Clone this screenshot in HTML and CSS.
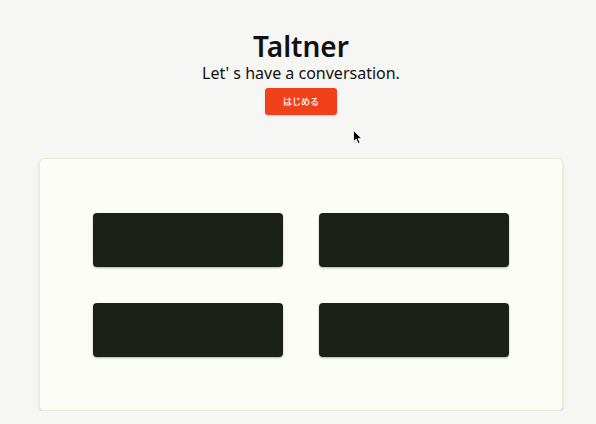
FILE: index.html
```html
<!DOCTYPE html>
<html lang="ja">
<head>
<meta charset="utf-8">
<title>Taltner</title>
<link rel="stylesheet" href="styles.css">
</head>
<body>
<div class="page">
  <header class="hero">
    <h1 class="title">Taltner</h1>
    <p class="subtitle">Let' s have a conversation.</p>
    <button class="start">はじめる</button>
  </header>
  <section class="card">
    <div class="block"></div>
    <div class="block"></div>
    <div class="block"></div>
    <div class="block"></div>
  </section>
</div>
<svg class="cursor" width="10" height="15" viewBox="0 0 10 15"><path d="M0.5 0.5 L0.5 11.5 L3.2 9 L5.2 13.6 L7 12.8 L5.1 8.4 L8.6 8.4 Z" fill="#000" stroke="#fff" stroke-width="0.8"/></svg>
</body>
</html>
```
FILE: styles.css
```css
html, body {
  margin: 0;
  padding: 0;
  background: #f6f6f5;
  font-family: "Noto Sans", "Open Sans", sans-serif;
  color: #111;
}
.page {
  width: 524px;
  margin-left: 39px;
  padding-top: 28px;
}
.hero {
  display: flex;
  flex-direction: column;
  align-items: center;
}
.title {
  margin: 0;
  font-size: 28px;
  line-height: 36px;
  font-weight: 600;
  color: #111;
}
.subtitle {
  margin: 0;
  font-size: 16px;
  line-height: 18px;
  color: #111;
}
.start {
  margin-top: 6px;
  width: 72px;
  height: 27px;
  border: none;
  border-radius: 3px;
  background: #f1411b;
  color: #fff;
  font-family: "Noto Sans CJK JP", sans-serif;
  font-size: 9px;
  font-weight: 500;
  padding: 0;
  box-shadow: 0 1px 2px rgba(0,0,0,0.15);
}
.card {
  margin-top: 43px;
  box-sizing: border-box;
  width: 524px;
  height: 253px;
  padding: 54px 54px 54px 53px;
  background: #fdfdf7;
  border: 1px solid #ecebd6;
  border-radius: 5px;
  box-shadow: 0 2px 3px rgba(0,0,0,0.12);
  display: grid;
  grid-template-columns: 190px 190px;
  grid-auto-rows: 54px;
  column-gap: 36px;
  row-gap: 36px;
}
.block {
  background: #1b2119;
  border-radius: 4px;
  box-shadow: 0 1px 2px rgba(0,0,0,0.3);
}
.cursor {
  position: absolute;
  left: 353px;
  top: 130px;
}
```
